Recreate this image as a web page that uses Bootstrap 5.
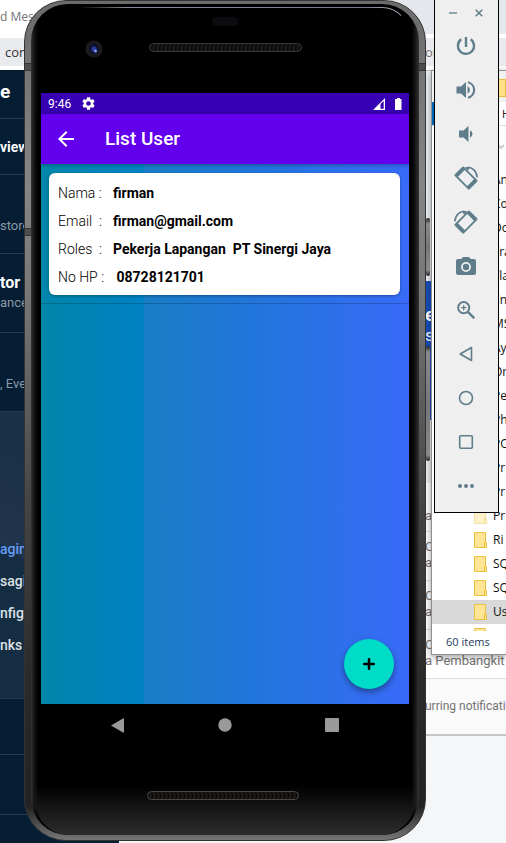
<!DOCTYPE html>
<html lang="id">
<head>
<meta charset="utf-8">
<meta name="viewport" content="width=device-width, initial-scale=1">
<title>List User</title>
<link href="https://cdn.jsdelivr.net/npm/bootstrap@5.3.0/dist/css/bootstrap.min.css" rel="stylesheet">
<style>
body{font-family:Roboto,"Liberation Sans",sans-serif;font-size:14px;line-height:20px;background:#f5f6f8}
button{border:0;background:none;padding:0;color:inherit}
svg{display:block;flex-shrink:0}
a{text-decoration:none;color:inherit}
.desktop{min-height:100vh}
/* browser window behind */
.tabstrip{height:38px;background:#e4e8ec;border-bottom:4px solid #fff}
.active-tab{width:150px;height:38px;background:#fff;font-size:12px;color:#6f7378;font-family:"Open Sans",sans-serif;line-height:34px}
.address{height:32px;background:#e9eaed;border-bottom:4px solid #fff;font:13px/28px "Open Sans",sans-serif;color:#333;padding-left:5px}
.sidebar{width:119px;background:#051e34;color:#8b98a5;font-size:13px}
.side-block{border-bottom:1px solid #263d50}
.side-48{height:49px;font-size:19px}
.side-56{height:56px;font-size:14px}
.side-79{height:79px}
.side-60{height:60px}
.side-products{height:287px;background:linear-gradient(35deg,#152d42 42%,#20344b 42%,#152d42);color:#dce1e5;font-weight:500;font-size:14px;line-height:32px;padding-bottom:37px}
.side-products .current{color:#669df6}
.page-strip{width:81px;color:#757575;font-size:13px}
.strip-top{height:211px;background:#edf0f4;border-top:1px solid #b9bdc2}
.strip-blue{height:139px;background:#184fbd;font-size:19px;padding-top:24px}
.strip-mid{height:63px;background:#eceef0}
.strip-cell{height:49px;border-bottom:1px solid #ddd;line-height:16px;padding-top:7px;background:#fff}
.strip-first{padding-top:25px}
.strip-note{height:57px;background:#fafafa;border-bottom:2px solid #c4c6c8;font-size:12px;line-height:55px}
/* file explorer */
.explorer{left:431px;right:0;top:70px;background:#fff;border:1px solid #8d8f91;border-right:0;box-shadow:0 2px 7px #0006;font:12px/24px "Open Sans","Noto Sans",sans-serif;color:#111}
.ex-title{height:31px;background:#f1f1f1}
.ex-chip{width:40px;height:18px;background:#ffe084;border:1px solid #e9bd45;margin-top:8px}
.ex-tabs{height:24px;border-bottom:1px solid #ddd;gap:14px;font-size:11px}
.ex-file{width:56px;background:#0067b8;color:#fff}
.ex-ribbon{height:42px}
.ex-list{height:463px}
.ex-row{height:24px;padding-left:42px;gap:6px}
.ex-row.chosen{background:#d9d9d9}
.ex-status{height:23px;padding-left:14px;color:#1e395b;line-height:22px;font-size:11px}
/* phone */
.phone{left:24px;right:80px;top:0;bottom:2px;border-radius:42px;background:linear-gradient(#6b6b6b,#858585 22%,#777 35%,#444 60%,#2b2b2b 80%,#222 96%,#777 100%);padding:3px 6px 5px;border:1px solid #333}
.body-shell{border-radius:37px;padding:0 10px;background:linear-gradient(90deg,#333,#161616 3px,#000 7px,#000 calc(100% - 7px),#1c1c1c calc(100% - 3px),#333)}
.body-shell::after{content:"";height:50px;left:4px;right:4px;bottom:0;position:absolute;border-radius:0 0 34px 34px;background:linear-gradient(#0000,#2d2d2d)}
.key{width:4px;right:-5px;border-radius:2px;background:linear-gradient(#222,#8a8a8a 6px,#777 50%,#8a8a8a calc(100% - 6px),#222)}
.key-power{top:217px;height:58px}
.key-volume{top:345px;height:115px}
.seam{height:8px;top:62px;left:0;width:6px;background:#4d4d4d;border:solid #333;border-width:1px 0}
.seam-right{left:auto;right:0}
.seam-low{top:227px}
.bezel-top{height:89px}
.bezel-bottom{height:89px}
.status{height:21px;background:#3700b3;font-size:12px;padding:0 6px 0 7px}
.status-gear{margin-left:11px}
.appbar{height:50px;background:#6200ee;padding:0 17px;gap:31px;box-shadow:0 1px 4px #0005;z-index:1}
.appbar h1{font-size:19px;font-weight:500}
.screen{background:linear-gradient(90deg,#0086aa,#0082c4 28%,#197ec6 28%,#2375dd 60%,#386bf8)}
.user{margin:9px 9px 0 8px;padding:6px 9px 4px;border-radius:6px;box-shadow:0 1px 3px #0005}
.user-row{line-height:28px;gap:9px;white-space:pre;color:#000}
.user dt{font-weight:300;min-width:46px;font-size:14px}
.user dd{font-weight:700;font-size:14px}
.rule{height:1px;margin-top:8px;background:#0003}
.fab{right:15px;bottom:15px;width:50px;height:50px;background:#00dcc8;box-shadow:0 3px 6px #0006}
.softkeys{height:42px;padding:0 24px;color:#999}
/* emulator toolbar */
.emu{left:434px;right:7px;top:0;background:#efefef;border:solid #000;border-width:0 1px 1px;padding:0 2px 4px 0;color:#607d8b}
.emu-head{height:24px;gap:18px;padding-top:2px}
.emu-btn{height:44px}
</style>
<script src="https://cdn.jsdelivr.net/npm/bootstrap@5.3.0/dist/js/bootstrap.bundle.min.js"></script>
</head>
<body>
<div class="desktop position-relative overflow-hidden d-flex flex-column">
  <header class="text-nowrap">
    <div class="tabstrip"><div class="active-tab">d Mess</div></div>
    <div class="address d-flex"><span>con</span><span class="ms-auto page-strip">om</span></div>
  </header>
  <div class="d-flex flex-grow-1 text-nowrap overflow-hidden">
    <nav class="sidebar flex-shrink-0">
      <div class="side-block side-48 d-flex align-items-center text-white fw-bold pb-1">e</div>
      <div class="side-block side-56 d-flex align-items-center text-light fw-bold"><a href="#">view</a></div>
      <div class="side-block side-79 d-flex align-items-center pt-4">store</div>
      <div class="side-block side-79 d-flex flex-column justify-content-center"><span class="text-white fw-bold fs-6">tor</span><span>ance</span></div>
      <div class="side-block side-79 d-flex align-items-center pt-4">, Eve</div>
      <div class="side-block side-products d-flex flex-column justify-content-end"><a class="current" href="#">agin</a><a href="#">sagi</a><a href="#">nfig</a><a href="#">nks</a></div>
      <div class="side-block side-56"></div>
      <div class="side-block side-60"></div>
    </nav>
    <main class="page-strip ms-auto flex-shrink-0">
      <div class="strip-top"></div>
      <div class="strip-blue text-white fw-bold">e<br><small class="fw-normal">s</small></div>
      <div class="strip-mid"></div>
      <div class="strip-cell strip-first">at</div>
      <div class="strip-cell">C<br>a</div>
      <div class="strip-cell">C<br>a</div>
      <div class="strip-cell">C<br>a Pembangkit</div>
      <div class="strip-note">urring notificati</div>
    </main>
  </div>

  <section class="explorer position-absolute" aria-label="File Explorer">
    <div class="ex-title d-flex justify-content-end"><div class="ex-chip"></div></div>
    <div class="ex-tabs d-flex overflow-hidden"><button class="ex-file flex-shrink-0">File</button><button>H</button></div>
    <div class="ex-ribbon d-flex justify-content-end align-items-center"><svg width="8" height="8" viewBox="0 0 8 8" fill="none" stroke="#ccc" stroke-width="2"><path d="M0 2l3 3 3-3"/></svg></div>
    <svg class="d-none"><symbol id="folder" viewBox="0 0 13 16"><path d="M.5.5h11v10h1v5H.5z" fill="#ffe696" stroke="#e8c044"/><path d="M10.500 10.500h2v5h-2z" fill="#ffe696" stroke="#e8c044"/></symbol></svg>
    <div class="ex-list overflow-hidden">
      <div class="ex-row d-flex align-items-center"><svg width="13" height="16"><use href="#folder"/></svg>An</div>
      <div class="ex-row d-flex align-items-center"><svg width="13" height="16"><use href="#folder"/></svg>Co</div>
      <div class="ex-row d-flex align-items-center"><svg width="13" height="16"><use href="#folder"/></svg>Do</div>
      <div class="ex-row d-flex align-items-center"><svg width="13" height="16"><use href="#folder"/></svg>Fra</div>
      <div class="ex-row d-flex align-items-center"><svg width="13" height="16"><use href="#folder"/></svg>Fla</div>
      <div class="ex-row d-flex align-items-center"><svg width="13" height="16"><use href="#folder"/></svg>Ent</div>
      <div class="ex-row d-flex align-items-center"><svg width="13" height="16"><use href="#folder"/></svg>MS</div>
      <div class="ex-row d-flex align-items-center"><svg width="13" height="16"><use href="#folder"/></svg>Ay</div>
      <div class="ex-row d-flex align-items-center"><svg width="13" height="16"><use href="#folder"/></svg>Or</div>
      <div class="ex-row d-flex align-items-center"><svg width="13" height="16"><use href="#folder"/></svg>Pe</div>
      <div class="ex-row d-flex align-items-center"><svg width="13" height="16"><use href="#folder"/></svg>Ph</div>
      <div class="ex-row d-flex align-items-center"><svg width="13" height="16"><use href="#folder"/></svg>PO</div>
      <div class="ex-row d-flex align-items-center"><svg width="13" height="16"><use href="#folder"/></svg>Pr</div>
      <div class="ex-row d-flex align-items-center"><svg width="13" height="16"><use href="#folder"/></svg>Pr</div>
      <div class="ex-row d-flex align-items-center"><svg class="opacity-50" width="13" height="16"><use href="#folder"/></svg>Pr</div>
      <div class="ex-row d-flex align-items-center"><svg width="13" height="16"><use href="#folder"/></svg>Ri</div>
      <div class="ex-row d-flex align-items-center"><svg width="13" height="16"><use href="#folder"/></svg>SQ</div>
      <div class="ex-row d-flex align-items-center"><svg width="13" height="16"><use href="#folder"/></svg>SQ</div>
      <div class="ex-row chosen d-flex align-items-center"><svg width="13" height="16"><use href="#folder"/></svg>Us</div>
      <div class="ex-row d-flex align-items-center"><svg width="13" height="16"><use href="#folder"/></svg></div>
    </div>
    <div class="ex-status">60 items</div>
  </section>

  <section class="phone position-absolute d-flex" aria-label="Android Emulator">
    <i class="key key-power position-absolute"></i><i class="key key-volume position-absolute"></i>
    <i class="seam position-absolute seam-low"></i><i class="seam position-absolute"></i><i class="seam seam-right position-absolute"></i>
    <div class="body-shell position-relative flex-grow-1 d-flex flex-column">
      <div class="bezel-top">
        <svg width="100%" height="89" viewBox="0 0 368 89">
          <defs><linearGradient id="edge"><stop offset="0" stop-color="#999" stop-opacity="0"/><stop offset=".15" stop-color="#889"/><stop offset=".9" stop-color="#778"/><stop offset="1" stop-color="#ccd"/></linearGradient>
          <pattern id="mesh" width="4" height="9" patternUnits="userSpaceOnUse"><path d="M0 0l2 4-2 5" fill="none" stroke="#2a2724"/></pattern></defs>
          <path d="M38 3.500H340c9 0 15 3 20 8" fill="none" stroke="url(#edge)"/>
          <rect x="171" y="13" width="26" height="9" rx="4.500" fill="#0b0c10"/>
          <circle cx="53" cy="45" r="8.500" fill="#1b1b1e"/><circle cx="53" cy="45" r="5" fill="#0c1230"/><circle cx="53" cy="45" r="2.500" fill="#2b3b9c"/><circle cx="54.500" cy="47" r="1.500" fill="#7f9cff"/>
          <rect x="108.500" y="39.500" width="152" height="8" rx="4" fill="#0e0d0c"/><rect x="108.500" y="39.500" width="152" height="8" rx="4" fill="url(#mesh)" stroke="#383838"/>
        </svg>
      </div>
      <div class="status d-flex align-items-center text-white">
        <span>9:46</span>
        <svg class="status-gear me-auto" width="13" height="13" viewBox="2 2 20 20" fill="#fff"><path d="M19.140 12.940c.04-.3.06-.61.06-.94 0-.32-.02-.64-.07-.94l2.030-1.580c.18-.14.23-.41.12-.61l-1.920-3.320c-.12-.22-.37-.29-.59-.22l-2.390.96c-.5-.38-1.030-.7-1.620-.94l-.36-2.540c-.04-.24-.24-.41-.48-.41h-3.840c-.24 0-.43.17-.47.41l-.36 2.540c-.59.24-1.130.57-1.620.94l-2.390-.96c-.22-.08-.47 0-.59.22L2.740 8.870c-.12.21-.08.47.12.61l2.030 1.580c-.05.3-.09.63-.09.94s.02.64.07.94l-2.030 1.580c-.18.14-.23.41-.12.61l1.920 3.320c.12.22.37.29.59.22l2.390-.96c.5.38 1.030.7 1.620.94l.36 2.540c.05.24.24.41.48.41h3.840c.24 0 .44-.17.47-.41l.36-2.540c.59-.24 1.130-.56 1.620-.94l2.390.96c.22.08.47 0 .59-.22l1.920-3.320c.12-.22.07-.47-.12-.61l-2.010-1.580zM12 15.600a3.600 3.600 0 1 1 0-7.200 3.600 3.600 0 0 1 0 7.200z"/></svg>
        <svg class="me-1" width="13" height="12" viewBox="0 0 13 12"><path fill="#fff" fill-rule="evenodd" d="M0 12L12 0v12zM7.500 6v4.800h3.200V3z"/></svg>
        <svg class="ms-1" width="9" height="12" viewBox="0 0 9 12"><path fill="#fff" d="M3 0h3v1h1.500v11h-6.500V1H3z"/></svg>
      </div>
      <div class="appbar d-flex align-items-center text-white">
        <button aria-label="Back"><svg width="16" height="16" viewBox="4 4 16 16" fill="#fff"><path d="M20 11H7.830l5.590-5.590L12 4l-8 8 8 8 1.410-1.410L7.830 13H20v-2z"/></svg></button>
        <h1 class="m-0">List User</h1>
      </div>
      <div class="screen position-relative flex-grow-1">
        <div class="overflow-hidden">
          <dl class="user bg-white">
            <div class="user-row d-flex"><dt>Nama :</dt><dd class="m-0">firman</dd></div>
            <div class="user-row d-flex"><dt>Email  :</dt><dd class="m-0">firman@gmail.com</dd></div>
            <div class="user-row d-flex"><dt>Roles  :</dt><dd class="m-0">Pekerja Lapangan  PT Sinergi Jaya</dd></div>
            <div class="user-row d-flex"><dt>No HP : </dt><dd class="m-0">08728121701</dd></div>
          </dl>
          <div class="rule"></div>
        </div>
        <button class="fab rounded-circle position-absolute d-flex align-items-center justify-content-center" aria-label="Tambah user"><svg width="12" height="12" viewBox="0 0 12 12" fill="none" stroke="#000" stroke-width="2.500" stroke-linecap="round"><path d="M6 1.200v9.600M1.200 6h9.600"/></svg></button>
      </div>
      <div class="softkeys d-flex align-items-center">
        <button class="flex-fill d-flex justify-content-center" aria-label="Back"><svg width="14" height="15" viewBox="0 0 14 15" fill="#999"><path d="M0 7.500L12 .5q1-.5 1 .5v13q0 1-1 .5z"/></svg></button>
        <button class="flex-fill d-flex justify-content-center" aria-label="Home"><svg width="14" height="14" viewBox="0 0 14 14" fill="#999"><circle cx="7" cy="7" r="6.700"/></svg></button>
        <button class="flex-fill d-flex justify-content-center" aria-label="Recent apps"><svg width="14" height="14" viewBox="0 0 14 14" fill="#999"><rect width="14" height="14" rx="1"/></svg></button>
      </div>
      <div class="bezel-bottom position-relative z-1">
        <svg width="100%" height="89" viewBox="0 0 368 89"><rect x="106.500" y="45.500" width="151" height="8" rx="4" fill="#0e0d0c"/><rect x="106.500" y="45.500" width="151" height="8" rx="4" fill="url(#mesh)" stroke="#484848"/></svg>
      </div>
    </div>
  </section>

  <aside class="emu position-absolute" aria-label="Emulator controls">
    <div class="emu-head d-flex justify-content-center align-items-center">
      <button aria-label="Minimize"><svg width="8" height="8" viewBox="0 0 8 8"><path d="M0 4h8" stroke="#90a4ae" stroke-width="2"/></svg></button>
      <button aria-label="Close"><svg width="8" height="8" viewBox="0 0 8 8"><path d="M.7.7l6.600 6.600M7.300.7L.7 7.300" stroke="#607d8b" stroke-width="1.500"/></svg></button>
    </div>
    <button class="emu-btn w-100 d-flex justify-content-center align-items-center" aria-label="Power"><svg width="20" height="20" viewBox="0 0 20 20" fill="none" stroke="#607d8b" stroke-width="2.400"><path d="M10 1v10M5.200 3.300a8.100 8.100 0 1 0 9.600 0"/></svg></button>
    <button class="emu-btn w-100 d-flex justify-content-center align-items-center" aria-label="Volume up"><svg width="20" height="20" viewBox="0 0 20 20" fill="#607d8b"><path d="M.5 6.500h4.500L10 2v16l-5-4.500H.5zM11.500 6.300a4 4 0 0 1 0 7.400z"/><path d="M12 2.300a7.900 7.900 0 0 1 0 15.400" fill="none" stroke="#607d8b" stroke-width="2.200"/></svg></button>
    <button class="emu-btn w-100 d-flex justify-content-center align-items-center" aria-label="Volume down"><svg width="20" height="20" viewBox="0 0 20 20" fill="#607d8b"><path d="M3 6.500h4.500L12.500 2v16l-5-4.500H3zM14 6.300a4 4 0 0 1 0 7.400z"/></svg></button>
    <button class="emu-btn w-100 d-flex justify-content-center align-items-center" aria-label="Rotate left"><svg width="24" height="24" viewBox="0 0 24 24" fill="#607d8b"><g transform="rotate(-45 12 12)"><path fill-rule="evenodd" d="M7 1.500h10q1.500 0 1.500 1.500v18q0 1.500-1.500 1.500h-10Q5.500 22.500 5.500 21v-18Q5.500 1.500 7 1.500zM7.300 5.500v13h9.400v-13z"/></g><path d="M12 1.800c6-1.300 10.500 3 11.200 9.500" fill="none" stroke="#607d8b" stroke-width="1.600"/><path d="M11 1.500l5-.8-2 4z"/></svg></button>
    <button class="emu-btn w-100 d-flex justify-content-center align-items-center" aria-label="Rotate right"><svg width="24" height="24" viewBox="0 0 24 24" fill="#607d8b"><g transform="matrix(-1 0 0 1 24 0)"><g transform="rotate(-45 12 12)"><path fill-rule="evenodd" d="M7 1.500h10q1.500 0 1.500 1.500v18q0 1.500-1.500 1.500h-10Q5.500 22.500 5.500 21v-18Q5.500 1.500 7 1.500zM7.300 5.500v13h9.400v-13z"/></g><path d="M12 1.800c6-1.300 10.500 3 11.200 9.500" fill="none" stroke="#607d8b" stroke-width="1.600"/><path d="M11 1.500l5-.8-2 4z"/></g></svg></button>
    <button class="emu-btn w-100 d-flex justify-content-center align-items-center" aria-label="Screenshot"><svg width="20" height="18" viewBox="0 0 20 18" fill="#607d8b"><path fill-rule="evenodd" d="M7 0h6l1.800 2H18q2 0 2 2v12q0 2-2 2H2q-2 0-2-2V4q0-2 2-2h3.200zM10 5a5 5 0 1 0 0 10 5 5 0 0 0 0-10z"/><circle cx="10" cy="10" r="3.200"/></svg></button>
    <button class="emu-btn w-100 d-flex justify-content-center align-items-center" aria-label="Zoom"><svg width="18" height="18" viewBox="0 0 18 18" fill="none" stroke="#607d8b" stroke-width="2"><circle cx="6.700" cy="6.700" r="5.600"/><path d="M6.700 4v5.400M4 6.700h5.400" stroke-width="1.200"/><path d="M10.800 10.800l6.400 6.400" stroke-width="2.400"/></svg></button>
    <button class="emu-btn w-100 d-flex justify-content-center align-items-center" aria-label="Back"><svg width="14" height="16" viewBox="0 0 14 16" fill="none" stroke="#607d8b" stroke-width="1.600" stroke-linejoin="round"><path d="M1.200 8L12.500 1.500v13z"/></svg></button>
    <button class="emu-btn w-100 d-flex justify-content-center align-items-center" aria-label="Home"><svg width="16" height="16" viewBox="0 0 16 16" fill="none" stroke="#607d8b" stroke-width="1.600"><circle cx="8" cy="8" r="6.500"/></svg></button>
    <button class="emu-btn w-100 d-flex justify-content-center align-items-center" aria-label="Overview"><svg width="16" height="16" viewBox="0 0 16 16" fill="none" stroke="#607d8b" stroke-width="1.600"><rect x="1.700" y="1.700" width="12.600" height="12.600" rx="1"/></svg></button>
    <button class="emu-btn w-100 d-flex justify-content-center align-items-center" aria-label="More"><svg width="16" height="4" viewBox="0 0 16 4" fill="#607d8b"><circle cx="2" cy="2" r="2"/><circle cx="8" cy="2" r="2"/><circle cx="14" cy="2" r="2"/></svg></button>
  </aside>
</div>
</body>
</html>
